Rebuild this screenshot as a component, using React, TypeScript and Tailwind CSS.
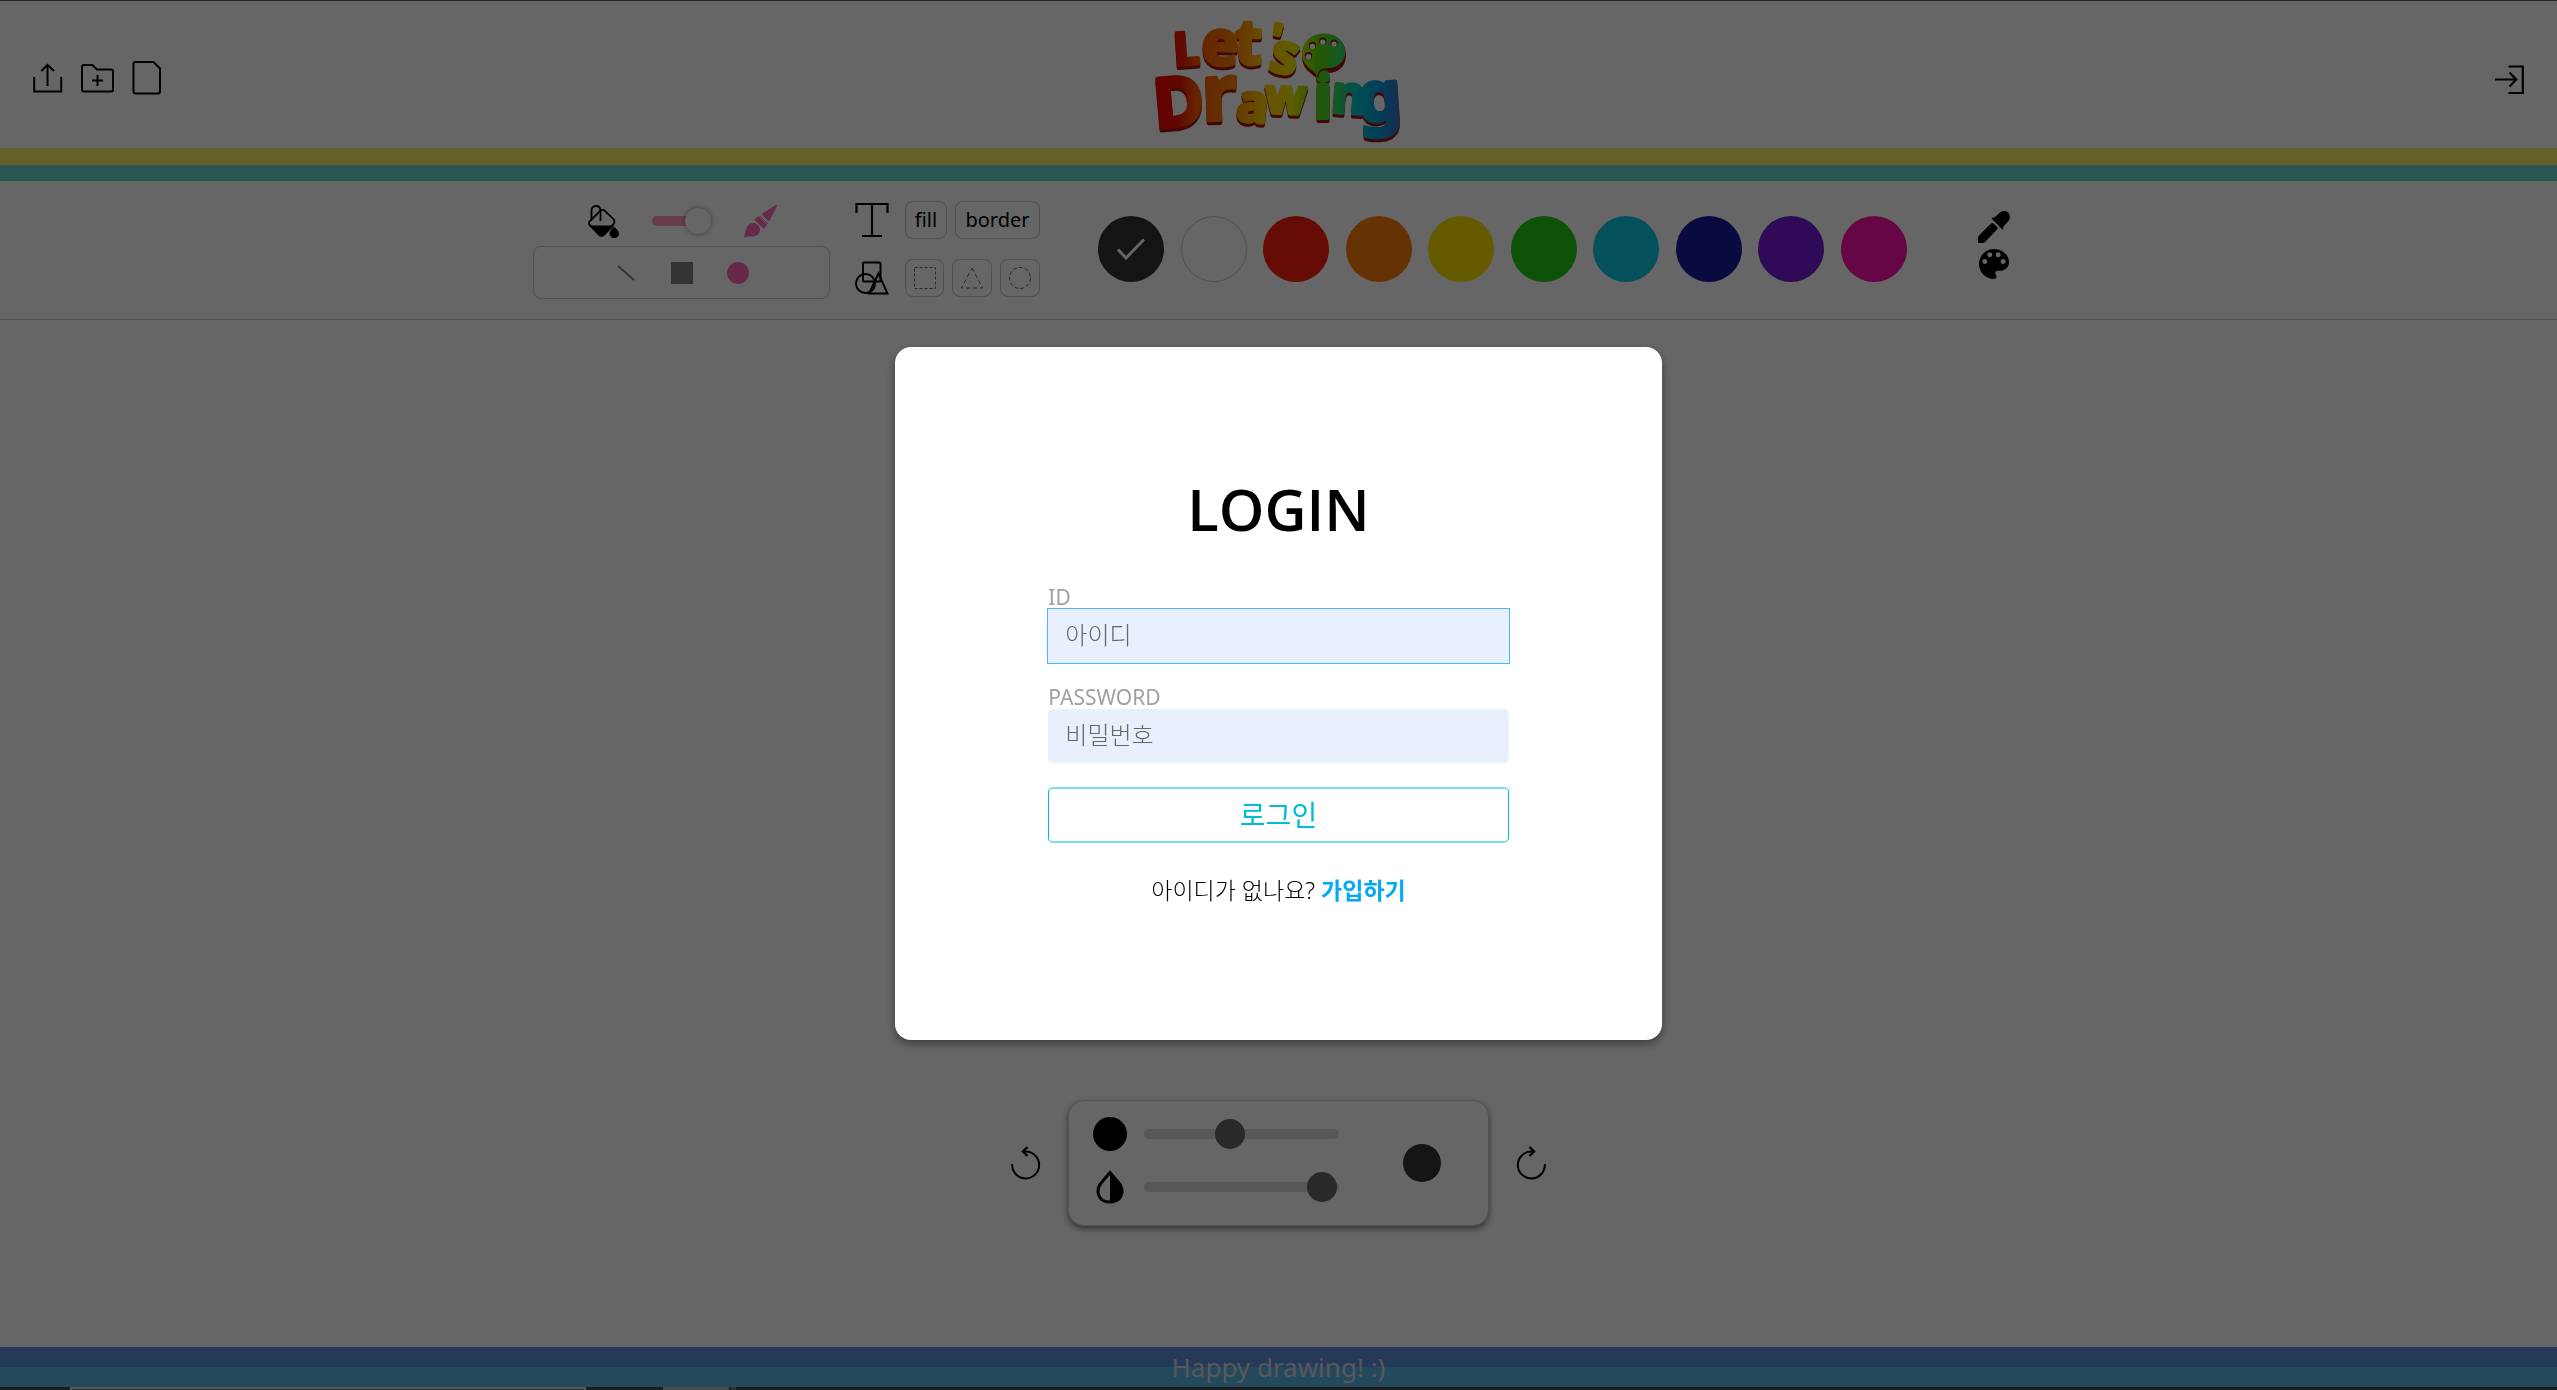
import React from "react";

const swatches = [
  { name: "black", cls: "bg-[#323232]" },
  { name: "white", cls: "bg-white border border-[#c8c8c8]" },
  { name: "red", cls: "bg-[#ff1e0c]" },
  { name: "orange", cls: "bg-[#ff7d0c]" },
  { name: "yellow", cls: "bg-[#ffe100]" },
  { name: "green", cls: "bg-[#23cd19]" },
  { name: "cyan", cls: "bg-[#0ac8e4]" },
  { name: "navy", cls: "bg-[#1419a0]" },
  { name: "purple", cls: "bg-[#7619d7]" },
  { name: "magenta", cls: "bg-[#ff0faa]" },
];

const logoWords = [
  [
    { c: "L", x: 168, y: 196, s: 134, r: -4 },
    { c: "e", x: 246, y: 192, s: 186, r: 2 },
    { c: "t", x: 346, y: 190, s: 186, r: 2 },
    { c: "'", x: 446, y: 156, s: 124, r: 12 },
    { c: "s", x: 446, y: 208, s: 164, r: 14 },
  ],
  [
    { c: "D", x: 110, y: 384, s: 206, r: -5 },
    { c: "r", x: 252, y: 362, s: 232, r: -2 },
    { c: "a", x: 350, y: 360, s: 156, r: 6 },
    { c: "w", x: 438, y: 338, s: 144, r: 2 },
    { c: "i", x: 586, y: 354, s: 182, r: 0 },
    { c: "n", x: 636, y: 336, s: 156, r: 4 },
    { c: "g", x: 722, y: 366, s: 208, r: -4 },
  ],
];

function Logo() {
  const blob =
    "M596 230 C588 206 550 204 550 162 C550 122 580 100 616 100 C654 100 679 124 679 156 C679 188 652 206 622 205 C606 205 598 212 596 230 Z";
  return (
    <svg
      viewBox="105 60 742 378"
      className="h-[126px] w-[247px] overflow-visible drop-shadow-[0_3px_0_#a01414]"
      role="img"
      aria-label="Let's Drawing"
    >
      <defs>
        <linearGradient id="rainbow" gradientUnits="userSpaceOnUse" x1="105" y1="220" x2="845" y2="260">
          <stop offset="0" stopColor="#ff0000" />
          <stop offset="0.11" stopColor="#f01800" />
          <stop offset="0.18" stopColor="#ff5a00" />
          <stop offset="0.32" stopColor="#ff8200" />
          <stop offset="0.44" stopColor="#ffc800" />
          <stop offset="0.56" stopColor="#f0e600" />
          <stop offset="0.66" stopColor="#5adc0a" />
          <stop offset="0.74" stopColor="#3cdc50" />
          <stop offset="0.82" stopColor="#00c8c8" />
          <stop offset="0.91" stopColor="#00a0dc" />
          <stop offset="1" stopColor="#3c6ec8" />
        </linearGradient>
      </defs>
      {logoWords.map((word, w) => (
        <text
          key={w}
          fill="url(#rainbow)"
          stroke="url(#rainbow)"
          strokeWidth="12"
          strokeLinejoin="round"
          className="font-['Noto_Sans',sans-serif] font-bold"
        >
          {word.map((l, i) => (
            <tspan key={i} x={l.x} y={l.y} fontSize={l.s} rotate={l.r}>
              {l.c}
            </tspan>
          ))}
        </text>
      ))}
      <path d={blob} fill="#a01414" transform="translate(2 5)" />
      <path d={blob} fill="url(#rainbow)" />
      {[
        [569, 167],
        [581, 136],
        [612, 123],
        [646, 129],
      ].map(([cx, cy]) => (
        <g key={cx}>
          <circle cx={cx} cy={cy} r="11" fill="#a01414" />
          <circle cx={cx} cy={cy + 3} r="8" fill="#fff" />
        </g>
      ))}
    </svg>
  );
}

function IconButton({ label, children }: { label: string; children: React.ReactNode }) {
  return (
    <button type="button" aria-label={label} className="flex items-center justify-center">
      {children}
    </button>
  );
}

function Header() {
  return (
    <header className="grid h-[147px] grid-cols-3 items-center bg-white pr-8 pl-[30px]">
      <nav className="flex items-center gap-[14px] pt-2">
        <IconButton label="Export">
          <svg viewBox="0 0 36 36" className="size-9" fill="none" stroke="#000" strokeWidth="2">
            <path d="M4.2 16V30.5H31.2V16" />
            <path d="M17.5 25V4M11.3 10L17.5 3.8L24 10" />
          </svg>
        </IconButton>
        <IconButton label="New folder">
          <svg viewBox="0 0 36 36" className="size-9" fill="none" stroke="#000" strokeWidth="2">
            <path d="M4 4H12.5L17 8.500H31Q33 8.500 33 10.500V28.500Q33 30.500 31 30.500H4Q2 30.500 2 28.500V6Q2 4 4 4Z" />
            <path d="M17.5 14V25M12 19.500H23" />
          </svg>
        </IconButton>
        <IconButton label="New file">
          <svg viewBox="0 0 36 36" className="size-9" fill="none" stroke="#000" strokeWidth="2">
            <path d="M5.500 1H23.500L30 7.500V30.500Q30 32.500 28 32.500H5.500Q3.500 32.500 3.500 30.500V3Q3.500 1 5.500 1Z" />
          </svg>
        </IconButton>
      </nav>
      <div className="flex justify-center pt-4">
        <Logo />
      </div>
      <div className="flex justify-end pt-[10px]">
        <IconButton label="Log in">
          <svg viewBox="0 0 30 30" className="size-[30px]" fill="none" stroke="#000" strokeWidth="2.200">
            <path d="M13.500 1.500H27.800V28H13.500" />
            <path d="M0 14.500H21M14.500 7.500L21.300 14.500L14.500 21.500" />
          </svg>
        </IconButton>
      </div>
    </header>
  );
}

function BrushPanel() {
  return (
    <div className="flex w-[297px] flex-col gap-[3px]">
      <div className="flex h-11 items-center justify-center gap-[33px] pl-[2px]">
        <IconButton label="Fill bucket">
          <svg viewBox="0 0 31 33" className="h-[33px] w-[31px]">
            <g fill="none" stroke="#000" strokeWidth="1.800">
              <path d="M12.500 5.500Q14.500 4.200 16.500 5.500L25.500 14Q27.500 16.500 25.500 19L16 29Q13.500 31.500 11 29L2 20.500Q0 18 2 16Z" />
              <path d="M3.500 15V6Q3.500 1 8 1Q12.500 1 12.500 6V16" />
            </g>
            <path d="M1 20.500H26.500L16.500 30.500Q13.500 33 10.500 30.500Z" />
            <path d="M26 21.500C28 24 31 25.500 31 28.500A4.700 4.700 0 0 1 21.500 28.500C21.500 25.500 24.500 24 26 21.500Z" />
          </svg>
        </IconButton>
        <input
          type="checkbox"
          role="switch"
          aria-label="Brush mode"
          defaultChecked
          className="relative h-[10px] w-[59px] appearance-none rounded-full bg-[#ff96b4] before:absolute before:-top-2 before:right-0 before:size-[26px] before:rounded-full before:bg-white before:shadow-[0_0_5px_rgba(0,0,0,0.4)]"
        />
        <IconButton label="Brush">
          <svg viewBox="0 0 33 33" className="size-[33px]" fill="#ff69b4">
            <path d="M33 0.500Q33 1.500 32 3L25 16.500L17.500 9L31 0.500Q32.500 -0.500 33 0.500Z" />
            <path d="M16 10.500L24 18.500L20 24L10 14.500Z" />
            <path d="M14.500 10L24 21" stroke="#fff" strokeWidth="1" />
            <path d="M0 32.500Q1 27 2.500 23.500A6.800 6.800 0 1 1 9 31.500Q5 31 0 32.500Z" />
          </svg>
        </IconButton>
      </div>
      <div className="flex h-[53px] items-center justify-center gap-[34px] rounded-lg border border-[#c8c8c8]">
        <IconButton label="Line">
          <svg viewBox="0 0 22 22" className="size-[22px]" stroke="#808080" strokeWidth="2">
            <path d="M3 4L19 18" />
          </svg>
        </IconButton>
        <button type="button" aria-label="Square tip" className="size-[22px] bg-[#808080]" />
        <button type="button" aria-label="Round tip" className="size-[22px] rounded-full bg-[#ff69b4]" />
      </div>
    </div>
  );
}

const tile = "flex h-[38px] items-center justify-center rounded-lg border border-[#c8c8c8]";

function ShapePanel() {
  return (
    <div className="grid gap-5">
      <div className="flex items-center gap-2">
        <svg viewBox="0 0 34 36" className="mr-2 h-9 w-[34px]" fill="none" stroke="#000" strokeWidth="2.200">
          <path d="M1.500 11V2H32.500V11M17 2V34M7 34H27" />
        </svg>
        <button type="button" className={tile + " w-[42px] text-xl"}>fill</button>
        <button type="button" className={tile + " w-[85px] text-xl"}>border</button>
      </div>
      <div className="flex items-center gap-2">
        <svg viewBox="0 0 34 34" className="mr-2 size-[34px]" fill="none" stroke="#000" strokeWidth="2">
          <rect x="8" y="1.500" width="17.500" height="19" rx="1" />
          <circle cx="10.500" cy="22.500" r="9.500" />
          <path d="M23.500 12.500L32.500 32.500H14Z" />
        </svg>
        <button type="button" aria-label="Rectangle" className={tile + " w-[39px]"}>
          <svg viewBox="0 0 22 22" className="size-[22px]" fill="none" stroke="#666" strokeDasharray="3 2">
            <rect x="0.500" y="0.500" width="21" height="21" />
          </svg>
        </button>
        <button type="button" aria-label="Triangle" className={tile + " w-10"}>
          <svg viewBox="0 0 22 22" className="size-[22px]" fill="none" stroke="#666" strokeDasharray="4 3">
            <path d="M11 1L21.500 21H0.500Z" />
          </svg>
        </button>
        <button type="button" aria-label="Circle" className={tile + " w-10"}>
          <svg viewBox="0 0 22 22" className="size-[22px]" fill="none" stroke="#666" strokeDasharray="4 2">
            <circle cx="11" cy="11" r="10.500" />
          </svg>
        </button>
      </div>
    </div>
  );
}

function Toolbar() {
  return (
    <section className="flex h-[139px] items-center justify-center border-b border-[#c8c8c8] bg-white pb-[2px]">
      <BrushPanel />
      <div className="ml-[25px]">
        <ShapePanel />
      </div>
      <div className="ml-[58px] flex w-[809px] justify-between">
        {swatches.map((s, i) => (
          <button
            key={s.name}
            type="button"
            aria-label={s.name}
            aria-pressed={i === 0}
            className={"flex size-[66px] items-center justify-center rounded-full " + s.cls}
          >
            {i === 0 && (
              <svg viewBox="0 0 28 22" className="h-[22px] w-7" fill="none" stroke="#fff" strokeWidth="3">
                <path d="M1 11.500L9 20L27 1.500" />
              </svg>
            )}
          </button>
        ))}
      </div>
      <div className="ml-[57px] flex w-[60px] flex-col items-center gap-[6px] pb-2">
        <IconButton label="Pick colour">
          <svg viewBox="0 0 32 32" className="size-8">
            <path d="M14.500 6.500L16 6.800L21.500 2C25 -1 29 0 30.500 2C32.500 5 32 8 30 10.500L25 16L25.500 17.500L24.500 18.500L13.500 7.500Z" />
            <path d="M13 12.500Q14.500 11.500 15.500 12.500L19.500 16.500Q20 17.500 19 18.500L7.500 30.500Q6 32 4 32H0V27Q0 25.500 1 24.500Z" />
          </svg>
        </IconButton>
        <IconButton label="Palette">
          <svg viewBox="3 3 18 18" className="size-[30px]">
            <path d="M12 3c-4.970 0-9 4.030-9 9s4.030 9 9 9c.830 0 1.500-.670 1.500-1.500 0-.390-.150-.740-.390-1.010-.230-.260-.380-.610-.380-.990 0-.830.670-1.500 1.500-1.500H16c2.760 0 5-2.240 5-5 0-4.420-4.030-8-9-8zm-5.500 9c-.830 0-1.500-.670-1.500-1.500S5.670 9 6.500 9 8 9.670 8 10.500 7.330 12 6.500 12zm3-4C8.670 8 8 7.330 8 6.500S8.670 5 9.500 5s1.500.670 1.500 1.500S10.330 8 9.500 8zm5 0c-.830 0-1.500-.670-1.500-1.500S13.670 5 14.500 5s1.500.670 1.500 1.500S15.330 8 14.500 8zm3 4c-.830 0-1.500-.670-1.500-1.500S16.670 9 17.500 9s1.500.670 1.500 1.500-.670 1.500-1.500 1.500z" />
          </svg>
        </IconButton>
      </div>
    </section>
  );
}

const range =
  "h-[10px] w-[195px] appearance-none rounded-full bg-[#d5dcda] [&::-webkit-slider-thumb]:size-[30px] [&::-webkit-slider-thumb]:appearance-none [&::-webkit-slider-thumb]:rounded-full [&::-webkit-slider-thumb]:bg-[#666]";

function UndoIcon({ flip }: { flip?: boolean }) {
  return (
    <svg
      viewBox="0 0 30 34"
      className={"h-[34px] w-[30px]" + (flip ? " -scale-x-100" : "")}
      fill="none"
      stroke="#000"
      strokeWidth="2"
    >
      <path d="M1.200 18A13.500 13.500 0 1 0 14 5.500H12.500" />
      <path d="M16.500 1L12 5.500L16.500 10" strokeWidth="2.400" />
    </svg>
  );
}

function Canvas() {
  return (
    <main className="flex flex-1 flex-col items-center justify-end bg-white pb-[121px]">
      <div className="flex items-center gap-[27px]">
        <IconButton label="Undo">
          <UndoIcon />
        </IconButton>
        <div className="flex h-[126px] w-[421px] items-center justify-between rounded-2xl border border-[#d0d0d0] bg-white pr-[47px] pl-6 shadow-[0_3px_6px_rgba(0,0,0,0.5)]">
          <div className="grid grid-cols-[34px_195px] items-center justify-items-center gap-x-[17px] gap-y-[19px] pb-[5px]">
            <span className="size-[34px] rounded-full bg-black" />
            <input type="range" aria-label="Brush size" defaultValue={43} className={range} />
            <svg viewBox="0 0 28 34" className="h-[34px] w-7">
              <path
                d="M14 2.500L5.500 12.500C-0.500 19.500 1 32 14 32S28.500 19.500 22.500 12.500Z"
                fill="none"
                stroke="#000"
                strokeWidth="3"
              />
              <path d="M14 2.500L22.500 12.500C28.500 19.500 27 32 14 32Z" />
            </svg>
            <input type="range" aria-label="Opacity" defaultValue={99} className={range} />
          </div>
          <span className="size-[38px] rounded-full bg-[#323232]" />
        </div>
        <IconButton label="Redo">
          <UndoIcon flip />
        </IconButton>
      </div>
    </main>
  );
}

function LoginDialog() {
  const field =
    "block h-[54px] w-full bg-[#e8f0fe] px-[17px] pb-1 text-2xl font-light placeholder:text-[#666]";
  return (
    <div className="fixed inset-0 flex items-center justify-center bg-black/60 pb-[3px]">
      <form
        role="dialog"
        aria-modal="true"
        aria-labelledby="login-title"
        className="w-[30%] rounded-2xl bg-white px-[6%] pt-[126px] pb-[134px] shadow-[0_4px_10px_rgba(0,0,0,0.4)]"
      >
        <h1 id="login-title" className="text-center font-['Open_Sans',sans-serif] text-[58px] leading-[72px] font-semibold">
          LOGIN
        </h1>
        <label htmlFor="user-id" className="mt-10 block text-[21px] leading-6 text-[#a0a0a0]">
          ID
        </label>
        <input
          id="user-id"
          type="text"
          placeholder="아이디"
          className={field + " outline-1 outline-[#4ab8fa]"}
        />
        <label htmlFor="user-password" className="mt-[22px] block text-[21px] leading-6 text-[#a0a0a0]">
          PASSWORD
        </label>
        <input
          id="user-password"
          type="password"
          placeholder="비밀번호"
          className={field + " rounded-[5px]"}
        />
        <button
          type="button"
          className="mt-6 block h-14 w-full rounded-[5px] border-x border-y-2 border-x-[#00bcd4] border-y-[#7fdde9] text-[28px] leading-8 text-[#00bcd4]"
        >
          로그인
        </button>
        <p className="mt-[31px] text-center text-[23px] leading-8 font-light">
          아이디가 없나요?{" "}
          <a href="#signup" className="font-bold text-[#03a9f4]">
            가입하기
          </a>
        </p>
      </form>
    </div>
  );
}

export default function App() {
  return (
    <div className="flex min-h-screen flex-col border-t border-[#606060] font-['Noto_Sans','Noto_Sans_CJK_KR',sans-serif] text-black">
      <Header />
      <div className="h-[17px] bg-[#fff069]" />
      <div className="h-4 bg-[#69dacd]" />
      <Toolbar />
      <Canvas />
      <footer className="flex h-10 items-center justify-center bg-linear-to-b from-[#5d91dc] from-50% to-[#5ab7e6] to-50% text-[26px] leading-8 text-[#d8dce0]">
        Happy drawing! :)
      </footer>
      <div className="flex h-[3px] bg-[#464646]">
        <div className="ml-[70px] h-full w-[516px] border-x-2 border-t-2 border-[#d5d5d5] bg-[#808080]" />
        <div className="ml-[77px] h-full w-[66px] bg-[#b9b9b9]" />
        <div className="ml-[2px] h-full w-[5px] bg-[#808080]" />
      </div>
      <LoginDialog />
    </div>
  );
}
